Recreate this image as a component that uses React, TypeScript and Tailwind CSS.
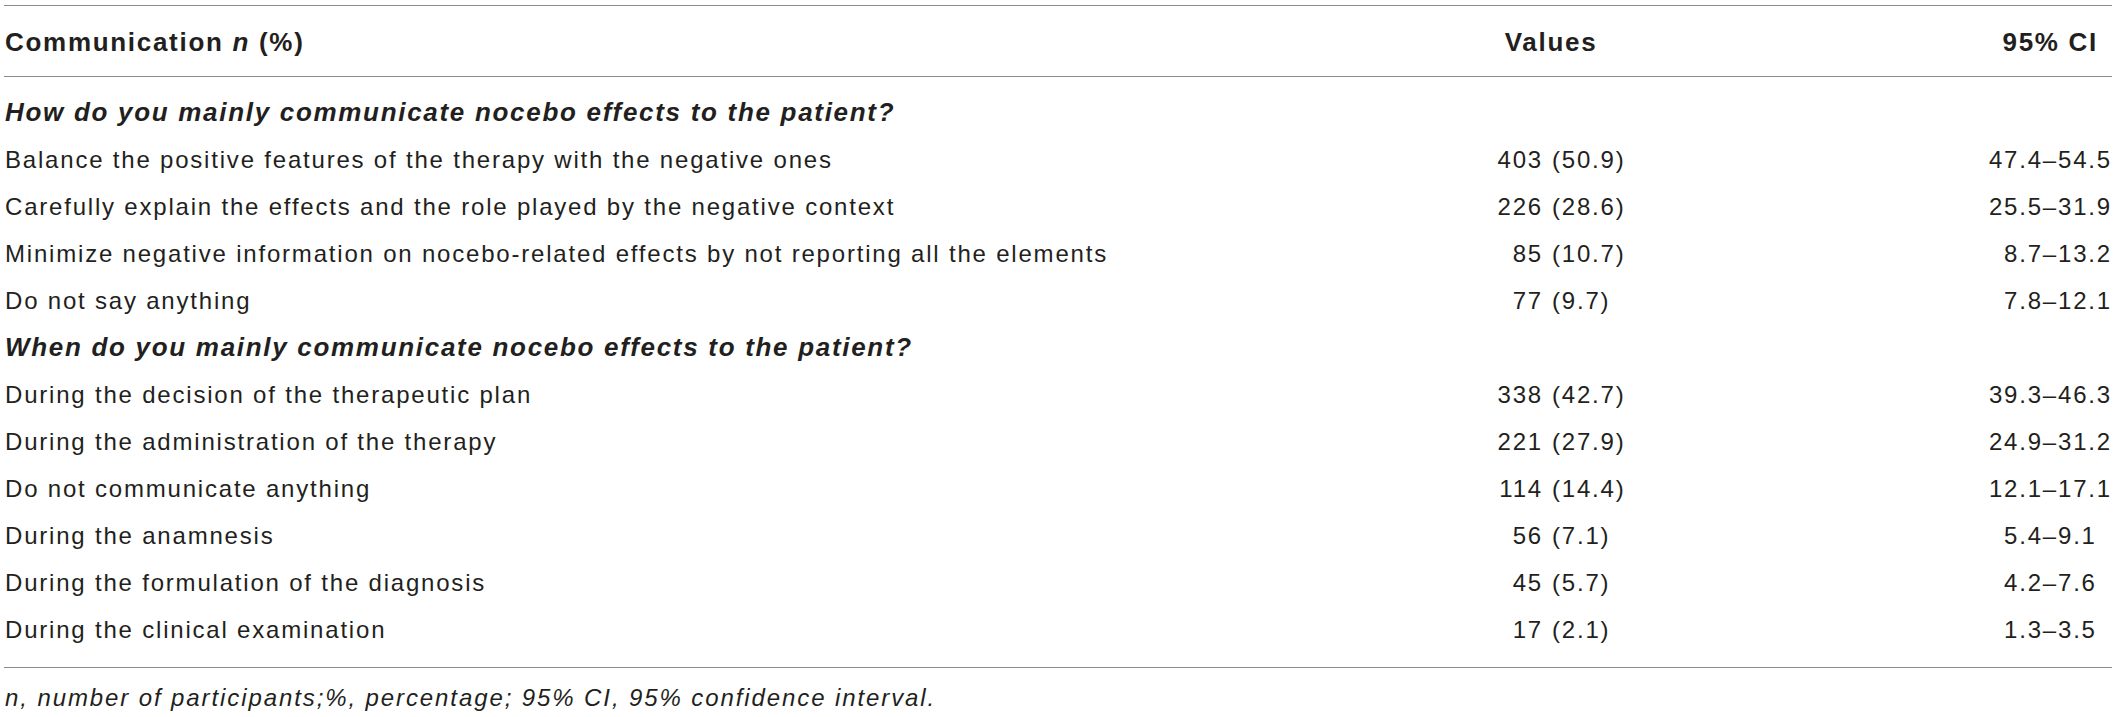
import React from "react";

type Row = { label: string; n: string; p: string; lo: string; hi: string };

const sec1: Row[] = [
  { label: "Balance the positive features of the therapy with the negative ones", n: "403", p: "(50.9)", lo: "47.4", hi: "54.5" },
  { label: "Carefully explain the effects and the role played by the negative context", n: "226", p: "(28.6)", lo: "25.5", hi: "31.9" },
  { label: "Minimize negative information on nocebo-related effects by not reporting all the elements", n: "85", p: "(10.7)", lo: "8.7", hi: "13.2" },
  { label: "Do not say anything", n: "77", p: "(9.7)", lo: "7.8", hi: "12.1" },
];

const sec2: Row[] = [
  { label: "During the decision of the therapeutic plan", n: "338", p: "(42.7)", lo: "39.3", hi: "46.3" },
  { label: "During the administration of the therapy", n: "221", p: "(27.9)", lo: "24.9", hi: "31.2" },
  { label: "Do not communicate anything", n: "114", p: "(14.4)", lo: "12.1", hi: "17.1" },
  { label: "During the anamnesis", n: "56", p: "(7.1)", lo: "5.4", hi: "9.1" },
  { label: "During the formulation of the diagnosis", n: "45", p: "(5.7)", lo: "4.2", hi: "7.6" },
  { label: "During the clinical examination", n: "17", p: "(2.1)", lo: "1.3", hi: "3.5" },
];

function DataRow({ r }: { r: Row }) {
  return (
    <div className="grid grid-cols-[1456px_182px_1fr] h-[47px] leading-[47px] text-[24px] tracking-[1.8px] whitespace-nowrap">
      <div className="pl-[1px]">{r.label}</div>
      <div className="flex">
        <span className="w-[83px] text-right">{r.n}</span>
        <span className="pl-[9px]">{r.p}</span>
      </div>
      <div className="flex justify-end">
        <span className="text-right">{r.lo}</span>
        <span>–</span>
        <span className="w-[54px] text-left">{r.hi}</span>
      </div>
    </div>
  );
}

function SectionHead({ text }: { text: string }) {
  return (
    <div className="h-[47px] leading-[47px] text-[26px] font-bold italic tracking-[1.7px] pl-[1px] whitespace-nowrap">
      {text}
    </div>
  );
}

export default function App() {
  return (
    <div
      className="w-[2118px] h-[717px] bg-white text-[#231f20] overflow-hidden"
      style={{ fontFamily: '"Liberation Sans", Arial, Helvetica, sans-serif' }}
    >
      <div className="ml-[4px] w-[2108px] pt-[5px]">
        <div className="border-t border-b border-[#8c8c8c] pt-[13px] pb-[10px]">
          <div className="grid grid-cols-[1456px_182px_1fr] h-[47px] leading-[47px] text-[26px] font-bold tracking-[1.7px] whitespace-nowrap">
            <div className="pl-[1px]">
              Communication <span className="italic">n</span> (%)
            </div>
            <div className="text-center">Values</div>
            <div className="text-right pr-[14px]">95% CI</div>
          </div>
        </div>
        <div className="border-b border-[#8c8c8c] pt-[12px] pb-[14px]">
          <SectionHead text="How do you mainly communicate nocebo effects to the patient?" />
          {sec1.map((r) => (
            <DataRow key={r.label} r={r} />
          ))}
          <SectionHead text="When do you mainly communicate nocebo effects to the patient?" />
          {sec2.map((r) => (
            <DataRow key={r.label} r={r} />
          ))}
        </div>
        <div className="mt-[12px] leading-[36px] text-[24px] italic tracking-[1.9px] pl-[1px] whitespace-nowrap">
          n, number of participants;%, percentage; 95% CI, 95% confidence interval.
        </div>
      </div>
    </div>
  );
}
